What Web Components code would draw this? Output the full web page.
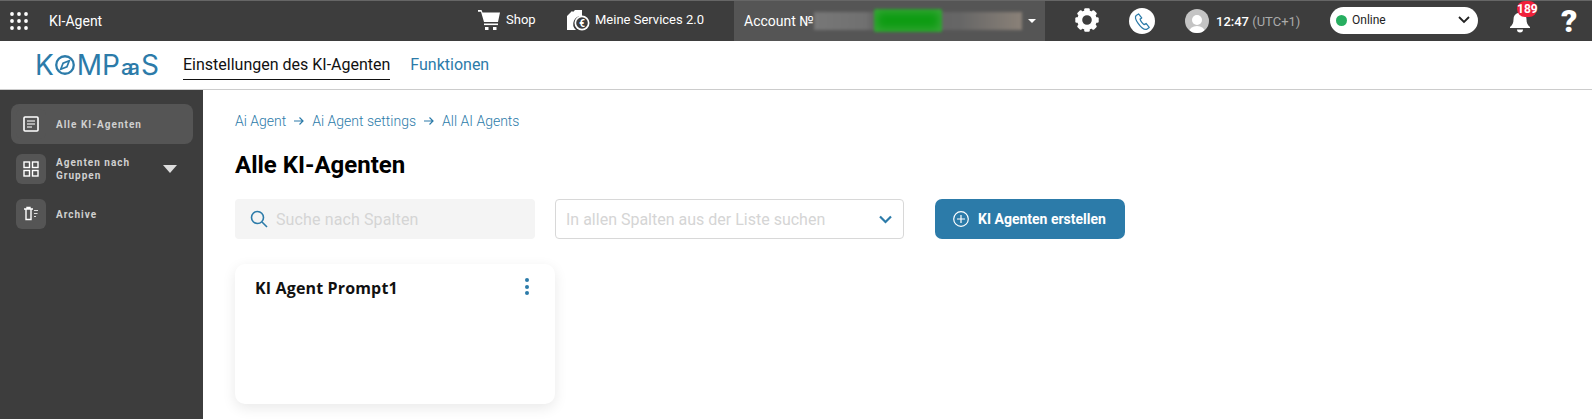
<!DOCTYPE html>
<html lang="de">
<head>
<meta charset="utf-8">
<title>KI-Agent</title>
<style>
    html, body {
        margin: 0;
        height: 100%;
        overflow: hidden;
        font-family: Roboto, "Liberation Sans", sans-serif;
        background: #fff;
    }
    body {
        display: flex;
        flex-direction: column;
    }
</style>
</head>
<body>
<top-bar></top-bar>
<sub-nav></sub-nav>
<page-body>
    <side-bar slot="side">
        <side-item label="Alle KI-Agenten" icon="list" active></side-item>
        <side-item label="Agenten nach Gruppen" icon="grid" caret></side-item>
        <side-item label="Archive" icon="trash" style="margin-top:5px"></side-item>
    </side-bar>
    <agents-page></agents-page>
</page-body>

<script>
class TopBar extends HTMLElement {
    constructor() {
        super();
        this.shadowDOM = this.attachShadow({mode: "open"});
    }

    connectedCallback() {
        const dots = [2, 9, 16].map(y => [2, 9, 16].map(x =>
            `<circle cx="${x}" cy="${y}" r="1.900" fill="#fff"/>`).join("")).join("");
        const teeth = [0, 45, 90, 135, 180, 225, 270, 315].map(a =>
            `<rect x="9.200" y="0.300" width="5.600" height="6" rx="1.200" transform="rotate(${a} 12 12)"/>`).join("");
        this.shadowDOM.innerHTML = `
        <style>
            :host {
                display: flex;
                align-items: center;
                box-sizing: border-box;
                height: 41px;
                flex: none;
                background: #3d3d3d;
                border-top: 1px solid #666;
                color: #fff;
                font-size: 13px;
            }
            .apps { margin-left: 10px; width: 18px; height: 18px; }
            .title { margin-left: 21px; width: 429px; font-size: 14px; }
            .shop { display: flex; align-items: center; width: 88px; margin-top: -3px; }
            .services { display: flex; align-items: center; width: 168px; margin-top: -3px; }
            .shop span { margin-left: 6px; }
            .services span { margin-left: 5px; }
            .account {
                display: flex;
                align-items: center;
                box-sizing: border-box;
                width: 311px;
                height: 40px;
                padding-left: 10px;
                background: #555;
                font-size: 14px;
                overflow: hidden;
            }
            .blur {
                position: relative;
                width: 208px;
                height: 18px;
                background: linear-gradient(90deg, #777 0, #707070 25%, #5f5f5f 30%, #666 70%, #8a8178 100%);
                filter: blur(1.500px);
            }
            .blur i {
                position: absolute;
                left: 60px;
                top: -3px;
                width: 68px;
                height: 23px;
                border-radius: 2px;
                background: #0d9c12;
                box-shadow: inset 0 0 8px 3px #3aa63a;
            }
            .caret {
                margin-left: 6px;
                border: 4px solid transparent;
                border-top: 4px solid #fff;
                border-bottom: 0;
            }
            .gear { margin-left: 30px; width: 24px; height: 24px; margin-top: -3px; }
            .phone {
                display: flex;
                align-items: center;
                justify-content: center;
                margin-left: 30px;
                width: 26px;
                height: 26px;
                border-radius: 50%;
                background: #fff;
            }
            .avatar { margin-left: 30px; width: 24px; height: 24px; }
            .time { margin-left: 7px; font-size: 13px; font-weight: 500; width: 114px; white-space: nowrap; }
            .time small { font-size: 13px; font-weight: 400; color: #aaa; }
            .status {
                display: flex;
                align-items: center;
                box-sizing: border-box;
                width: 148px;
                height: 27px;
                margin-top: -2px;
                padding: 0 6px;
                border-radius: 14px;
                background: #fff;
                color: #222;
                font-size: 12px;
            }
            .status .dot { width: 11px; height: 11px; border-radius: 50%; background: #27ae60; margin-right: 5px; }
            .status span { flex: 1; }
            .bell { position: relative; margin-left: 31px; width: 22px; height: 24px; }
            .badge {
                position: absolute;
                left: 8px;
                top: -8px;
                width: 20px;
                height: 16px;
                border-radius: 8px;
                background: #f0213a;
                color: #fff;
                font-size: 12px;
                font-weight: 700;
                line-height: 16px;
                text-align: center;
            }
            .help { margin-left: 30px; font-size: 32px; font-weight: 900; line-height: 40px; }
        </style>
        <svg class="apps" viewBox="0 0 18 18">${dots}</svg>
        <div class="title">KI-Agent</div>
        <div class="shop">
            <svg width="22" height="22" viewBox="0 0 22 22" fill="#fff">
                <path d="M0 1h3.500l1 2.500h17.500l-2 9.500h-14L3 2.800H0z"/>
                <rect x="6" y="14.500" width="14" height="1.600"/>
                <rect x="7" y="18" width="3.500" height="3"/><rect x="15" y="18" width="3.500" height="3"/>
            </svg>
            <span>Shop</span>
        </div>
        <div class="services">
            <svg width="24" height="24" viewBox="0 0 24 24">
                <path d="M1 8l5-5 1 1 2-2h7v6a8 8 0 0 0-6 14H1z" fill="#fff"/>
                <circle cx="16" cy="15" r="7.500" fill="#fff"/>
                <circle cx="16" cy="15" r="5.800" fill="#3d3d3d"/>
                <text x="16" y="18.500" text-anchor="middle" font-size="10" font-weight="700" fill="#fff" font-family="Roboto, sans-serif">€</text>
            </svg>
            <span>Meine Services 2.0</span>
        </div>
        <div class="account">
            Account №<div class="blur"><i></i></div><div class="caret"></div>
        </div>
        <svg class="gear" viewBox="0 0 24 24" fill="#fff">
            ${teeth}
            <circle cx="12" cy="12" r="7.300" fill="none" stroke="#fff" stroke-width="5"/>
        </svg>
        <div class="phone">
            <svg width="19" height="19" viewBox="0 0 24 24" fill="none" stroke="#2c7ba9" stroke-width="1.600" stroke-linejoin="round">
                <path d="M7 2.500 4 4.500C2.500 6 3 9.500 6.500 14.500s8 8 10.500 7.500l3.500-2.500-4-5-2.500 1.500c-1.500-.5-4.500-4.500-5-7l2-1.500z"/>
            </svg>
        </div>
        <svg class="avatar" viewBox="0 0 24 24">
            <defs><clipPath id="av"><circle cx="12" cy="12" r="12"/></clipPath></defs>
            <circle cx="12" cy="12" r="12" fill="#c4c4c4"/>
            <g clip-path="url(#av)" fill="#fff"><circle cx="12" cy="11" r="5"/><ellipse cx="12" cy="23" rx="8" ry="6"/></g>
        </svg>
        <div class="time">12:47 <small>(UTC+1)</small></div>
        <div class="status">
            <div class="dot"></div><span>Online</span>
            <svg width="14" height="8" viewBox="0 0 14 8" fill="none" stroke="#222" stroke-width="1.800" style="margin-right:1px"><path d="M2 1l5 5 5-5"/></svg>
        </div>
        <div class="bell">
            <svg width="22" height="24" viewBox="0 0 22 24" fill="#fff">
                <path d="M11 2a1.600 1.600 0 0 1 1.600 1.700C16 4.500 17.500 7 17.500 10.500c0 3.500 1 5.500 3.500 7.500v1H1v-1c2.500-2 3.500-4 3.500-7.500 0-3.500 1.500-6 4.900-6.800A1.600 1.600 0 0 1 11 2z"/>
                <path d="M8 20.500h6a3 3 0 0 1-6 0z"/>
            </svg>
            <div class="badge">189</div>
        </div>
        <div class="help">?</div>
        `;
    }
}

class SubNav extends HTMLElement {
    constructor() {
        super();
        this.shadowDOM = this.attachShadow({mode: "open"});
    }

    connectedCallback() {
        this.shadowDOM.innerHTML = `
        <style>
            :host {
                display: flex;
                align-items: center;
                box-sizing: border-box;
                height: 49px;
                flex: none;
                background: #fff;
                border-bottom: 1px solid #ccc;
                font-size: 16px;
            }
            .logo {
                display: flex;
                align-items: center;
                width: 148px;
                margin-left: 35px;
                color: #2c7ba9;
                font-family: Inter, sans-serif;
                font-size: 28px;
                line-height: 30px;
            }
            .logo svg { margin: 0 2px 0 1px; }
            .logo .aa { font-size: 22px; font-weight: 500; letter-spacing: -6px; margin: 4px 7px 0 1px; }
            .tab { color: #2c7ba9; margin-right: 20px; padding: 4px 0 5px; border-bottom: 1.500px solid transparent; }
            .tab.on { color: #111; border-bottom-color: #111; }
        </style>
        <div class="logo">
            <span>K</span>
            <svg width="20" height="20" viewBox="0 0 21 21">
                <circle cx="10.500" cy="10.500" r="9.200" fill="none" stroke="#2c7ba9" stroke-width="2.400"/>
                <path d="M15 6l-2.500 6.500L6 15l2.500-6.500z" fill="none" stroke="#2c7ba9" stroke-width="1.800"/>
            </svg>
            <span>MP</span><span class="aa">aa</span><span>S</span>
        </div>
        <div class="tab on">Einstellungen des KI-Agenten</div>
        <div class="tab">Funktionen</div>
        `;
    }
}

class PageBody extends HTMLElement {
    constructor() {
        super();
        this.shadowDOM = this.attachShadow({mode: "open"});
    }

    connectedCallback() {
        this.shadowDOM.innerHTML = `
        <style>
            :host {
                display: flex;
                flex: 1;
                min-height: 0;
            }
        </style>
        <slot name="side"></slot>
        <slot></slot>
        `;
    }
}

class SideBar extends HTMLElement {
    constructor() {
        super();
        this.shadowDOM = this.attachShadow({mode: "open"});
    }

    connectedCallback() {
        this.shadowDOM.innerHTML = `
        <style>
            :host {
                display: flex;
                flex-direction: column;
                box-sizing: border-box;
                width: 203px;
                flex: none;
                padding: 14px 10px 0 11px;
                background: #3d3d3d;
                gap: 10px;
            }
        </style>
        <slot></slot>
        `;
    }
}

const SIDE_ICONS = {
    list: `<rect x="1" y="1" width="14" height="14" rx="1" fill="none" stroke="#fff" stroke-width="1.600"/>
           <path d="M4 5h8M4 8h8M4 11h5" stroke="#ccc" stroke-width="1.500"/>`,
    grid: `<g fill="none" stroke="#fff" stroke-width="1.400">
             <rect x="1" y="1" width="5.500" height="5.500"/><rect x="9.500" y="1" width="5.500" height="5.500"/>
             <rect x="1" y="9.500" width="5.500" height="5.500"/><rect x="9.500" y="9.500" width="5.500" height="5.500"/>
           </g>`,
    trash: `<path d="M1 3h9M3 3v10.500h5V3M4 3V1.500h3V3" fill="none" stroke="#fff" stroke-width="1.400"/>
            <path d="M11 4.500h4M11 7.500h3.500M11 10.500h2" stroke="#ddd" stroke-width="1.200"/>`
};

class SideItem extends HTMLElement {
    constructor() {
        super();
        this.shadowDOM = this.attachShadow({mode: "open"});
    }

    connectedCallback() {
        const active = this.hasAttribute("active");
        const hasCaret = this.hasAttribute("caret");
        const caret = hasCaret ? `<div class="caret"></div>` : "";
        this.shadowDOM.innerHTML = `
        <style>
            :host {
                display: flex;
                align-items: center;
                box-sizing: border-box;
                height: ${active ? "40px" : "30px"};
                padding-left: 5px;
                border-radius: 8px;
                background: ${active ? "#555" : "transparent"};
                color: #d0d0d0;
                font-size: 10px;
                font-weight: 700;
                letter-spacing: 1px;
                line-height: 13px;
            }
            .box {
                display: flex;
                align-items: center;
                justify-content: center;
                width: 30px;
                height: 30px;
                flex: none;
                border-radius: 6px;
                background: #555;
                margin-right: 10px;
            }
            .label { ${hasCaret ? "width: 82px;" : "white-space: nowrap;"} }
            .caret {
                margin-left: 25px;
                border: 7px solid transparent;
                border-top: 8px solid #ddd;
                border-bottom: 0;
            }
        </style>
        <div class="box"><svg width="16" height="16" viewBox="0 0 16 16">${SIDE_ICONS[this.getAttribute("icon")]}</svg></div>
        <div class="label">${this.getAttribute("label")}</div>
        ${caret}
        `;
    }
}

class AgentCard extends HTMLElement {
    constructor() {
        super();
        this.shadowDOM = this.attachShadow({mode: "open"});
    }

    connectedCallback() {
        this.shadowDOM.innerHTML = `
        <style>
            :host {
                display: flex;
                justify-content: space-between;
                box-sizing: border-box;
                width: 320px;
                height: 140px;
                padding: 13px 26px 0 20px;
                border-radius: 10px;
                background: #fff;
                box-shadow: 0 4px 14px rgba(0, 0, 0, 0.09);
            }
            .name {
                font-family: "Open Sans", sans-serif;
                font-size: 16px;
                font-weight: 700;
                letter-spacing: 0.15px;
                line-height: 22px;
                color: #111;
            }
            .dots { display: flex; flex-direction: column; gap: 2.500px; padding-top: 1px; }
            .dots i { width: 4px; height: 4px; border-radius: 50%; background: #2c7ba9; }
        </style>
        <div class="name">${this.getAttribute("name")}</div>
        <div class="dots"><i></i><i></i><i></i></div>
        `;
    }
}

class AgentsPage extends HTMLElement {
    constructor() {
        super();
        this.shadowDOM = this.attachShadow({mode: "open"});
    }

    connectedCallback() {
        const arrow = `<svg class="arrow" width="12" height="10" viewBox="0 0 12 10" fill="none" stroke="#2c7ba9" stroke-width="1.200"><path d="M1 5h9M6.500 1.500 10 5 6.500 8.500"/></svg>`;
        this.shadowDOM.innerHTML = `
        <style>
            :host {
                display: block;
                flex: 1;
                padding: 22px 0 0 32px;
            }
            .crumbs {
                display: flex;
                align-items: center;
                height: 18px;
                font-size: 14px;
                font-weight: 300;
                color: #2c7ba9;
            }
            .arrow { margin: 0 7px; }
            h1 {
                margin: 19px 0 18px;
                height: 32px;
                font-size: 24px;
                line-height: 32px;
                font-weight: 700;
                color: #000;
            }
            .tools {
                display: flex;
                height: 40px;
                margin-bottom: 25px;
            }
            .search, .select {
                display: flex;
                align-items: center;
                box-sizing: border-box;
                border-radius: 4px;
                font-size: 16px;
                color: #d5d5d5;
            }
            .search { width: 300px; padding-left: 15px; background: #f4f4f4; letter-spacing: 0.12px; }
            .search svg { margin-right: 8px; }
            .select {
                width: 349px;
                margin-left: 20px;
                padding: 0 11px 0 10px;
                justify-content: space-between;
                border: 1px solid #d8d8d8;
            }
            .create {
                display: flex;
                align-items: center;
                box-sizing: border-box;
                width: 190px;
                margin-left: 31px;
                padding-left: 18px;
                border-radius: 7px;
                background: #2c7ba9;
                color: #fff;
                font-size: 14px;
                font-weight: 700;
            }
            .create svg { margin-right: 9px; }
        </style>
        <div class="crumbs">Ai Agent${arrow}Ai Agent settings${arrow}All AI Agents</div>
        <h1>Alle KI-Agenten</h1>
        <div class="tools">
            <div class="search">
                <svg width="18" height="18" viewBox="0 0 18 18" fill="none" stroke="#2c7ba9" stroke-width="1.600"><circle cx="7.500" cy="7.500" r="6"/><path d="M12 12l5 5"/></svg>
                Suche nach Spalten
            </div>
            <div class="select">
                In allen Spalten aus der Liste suchen
                <svg width="13" height="9" viewBox="0 0 13 9" fill="none" stroke="#2c7ba9" stroke-width="2.200"><path d="M1 1.500l5.500 5.500L12 1.500"/></svg>
            </div>
            <div class="create">
                <svg width="16" height="16" viewBox="0 0 16 16" fill="none" stroke="#fff" stroke-width="1.200"><circle cx="8" cy="8" r="7.300"/><path d="M8 4v8M4 8h8"/></svg>
                KI Agenten erstellen
            </div>
        </div>
        <agent-card name="KI Agent Prompt1"></agent-card>
        `;
    }
}

customElements.define("top-bar", TopBar);
customElements.define("sub-nav", SubNav);
customElements.define("page-body", PageBody);
customElements.define("side-bar", SideBar);
customElements.define("side-item", SideItem);
customElements.define("agent-card", AgentCard);
customElements.define("agents-page", AgentsPage);
</script>
</body>
</html>
